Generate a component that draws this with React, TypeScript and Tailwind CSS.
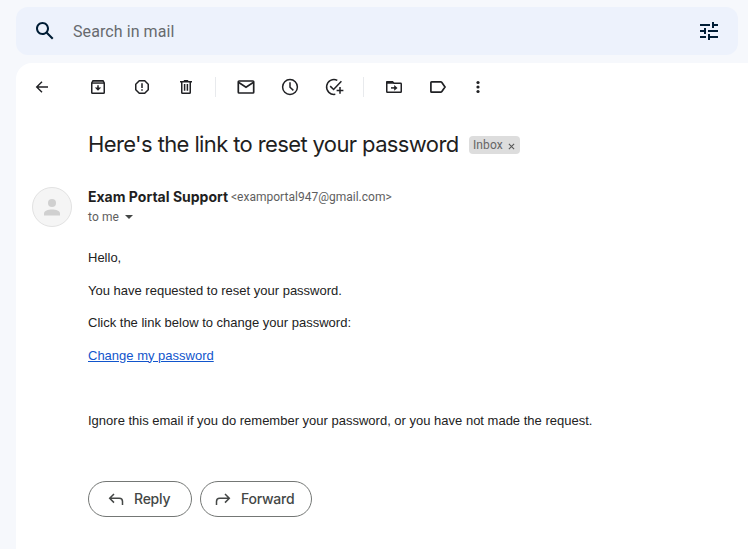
import type { ReactNode } from 'react';

type IconProps = { children: ReactNode; className?: string };

function Icon({ children, className = 'size-5' }: IconProps) {
  return (
    <svg viewBox="0 0 20 20" className={`block shrink-0 ${className}`} fill="none" stroke="currentColor" strokeWidth="1.5">
      {children}
    </svg>
  );
}

function ToolButton({ label, children }: { label: string; children: ReactNode }) {
  return (
    <button aria-label={label} className="flex h-10 w-11 shrink-0 items-center justify-center text-[#202124]">
      {children}
    </button>
  );
}

function SearchBar() {
  return (
    <div className="mr-2.5 ml-4 flex h-12 shrink-0 items-center rounded-xl bg-[#edf2fc] pr-[17px] pl-[17px] text-[#001d35]">
      <svg viewBox="0 0 24 24" className="size-6 shrink-0" fill="currentColor">
        <path d="M20.49 19l-5.73-5.73C15.53 12.2 16 10.91 16 9.5 16 5.91 13.09 3 9.5 3S3 5.91 3 9.5 5.91 16 9.5 16c1.41 0 2.7-.47 3.77-1.24L19 20.49 20.49 19zM5 9.5C5 7.01 7.01 5 9.5 5S14 7.01 14 9.5 11.99 14 9.5 14 5 11.99 5 9.5z" />
      </svg>
      <span className="ml-4 flex-1 pt-0.5 font-['Roboto',sans-serif] text-base tracking-[0.08px] whitespace-nowrap text-[#676a6e]">Search in mail</span>
      <svg viewBox="0 0 24 24" className="size-6 shrink-0" fill="currentColor">
        <path d="M3 17v2h6v-2H3zM3 5v2h10V5H3zm10 16v-2h8v-2h-8v-2h-2v6h2zM7 9v2H3v2h4v2h2V9H7zm14 4v-2H11v2h10zm-6-4h2V7h4V5h-4V3h-2v6z" />
      </svg>
    </div>
  );
}

function Toolbar() {
  return (
    <div className="flex h-12 items-center pl-1">
      <ToolButton label="Back">
        <Icon><path d="M16 10H5M10 4.7 4.7 10l5.3 5.3" strokeWidth="1.4" /></Icon>
      </ToolButton>
      <div className="w-3 shrink-0" />
      <ToolButton label="Archive">
        <Icon>
          <path d="M4 4h12v2.5H4Z" fill="#8a8a8a" stroke="none" />
          <path d="M3.75 6v9.5c0 .5.25.75.75.75h11c.5 0 .75-.25.75-.75V6L15 3.75H5L3.75 6Z" />
          <path d="M4 6.2h12" strokeWidth="1" />
          <path d="M10 8.3v4" />
          <path d="M6.8 10.6h6.4L10 13.8Z" fill="currentColor" stroke="none" />
        </Icon>
      </ToolButton>
      <ToolButton label="Report spam">
        <Icon>
          <path d="M7.3 3.75h5.4l3.55 3.55v5.4l-3.55 3.55H7.3L3.75 12.7V7.3Z" />
          <path d="M10 6.2v4.7M10 12.3v1.5" />
        </Icon>
      </ToolButton>
      <ToolButton label="Delete">
        <Icon>
          <path d="M4 4.75h12M7.8 3.75h4.4M5.75 5v10.5c0 .5.25.75.75.75h7c.5 0 .75-.25.75-.75V5" />
          <path d="M8.6 7v6.8M11.4 7v6.8" />
        </Icon>
      </ToolButton>
      <div className="mr-2 ml-[7px] h-5 w-px shrink-0 bg-[#e8eaed]" />
      <ToolButton label="Mark as unread">
        <Icon>
          <rect x="2.3" y="4" width="15.4" height="12" rx="0.8" strokeWidth="1.7" />
          <path d="m2.8 5.5 7.2 4.7 7.2-4.7" strokeWidth="1.6" />
        </Icon>
      </ToolButton>
      <ToolButton label="Snooze">
        <Icon><circle cx="10" cy="10" r="7.4" /><path d="M10 5.2v5l3.4 3.2" /></Icon>
      </ToolButton>
      <ToolButton label="Add to tasks">
        <Icon>
          <path d="M13.3 3.4A7.4 7.4 0 1 0 11.3 17.3" />
          <path d="m6.2 9.1 3.4 3.4 7.8-8.3M16 10v6.8M12.6 13.4h6.8" />
        </Icon>
      </ToolButton>
      <div className="mr-2 ml-[7px] h-5 w-px shrink-0 bg-[#e8eaed]" />
      <ToolButton label="Move to">
        <Icon>
          <path d="M2.75 5v9.5c0 .4.2.75.6.75h13.3c.4 0 .6-.3.6-.75V6.9c0-.4-.2-.6-.6-.6H10L8.5 4.75H3.2c-.3 0-.45.1-.45.25Z" />
          <path d="M2.5 4.2H8l2 2.6H2.5Z" fill="currentColor" stroke="none" />
          <path d="M7 10.9h4.5" />
          <path d="M10.2 8v5.8l3.3-2.9Z" fill="currentColor" stroke="none" />
        </Icon>
      </ToolButton>
      <ToolButton label="Labels">
        <Icon><path d="M3.6 4.85h9.2c.4 0 .7.2.9.5L17 10l-3.3 4.65c-.2.3-.5.5-.9.5H3.6c-.4 0-.7-.3-.7-.7v-8.9c0-.4.3-.7.7-.7Z" strokeWidth="1.7" /></Icon>
      </ToolButton>
      <div className="-ml-1">
        <ToolButton label="More">
          <Icon>
            <g fill="currentColor" stroke="none"><circle cx="10" cy="5.5" r="1.6" /><circle cx="10" cy="10" r="1.6" /><circle cx="10" cy="14.5" r="1.6" /></g>
          </Icon>
        </ToolButton>
      </div>
    </div>
  );
}

function Subject() {
  return (
    <div className="mt-4 flex h-9 items-center pl-[72px]">
      <h1 className="w-[371px] pb-0.5 font-['Inter',sans-serif] text-[22px] leading-7 tracking-[-0.62px] whitespace-nowrap text-[#1f1f1f]">
        Here's the link to reset your password
      </h1>
      <span className="ml-2.5 flex h-[18px] w-[51px] items-center rounded bg-[#ddd] pl-1 font-['Roboto',sans-serif] text-xs tracking-[0.1px] text-[#666]">
        Inbox
        <svg viewBox="0 0 8 8" className="mt-0.5 ml-[5px] size-[7px]" stroke="#555" strokeWidth="1.2"><path d="m1 1 6 6m0-6L1 7" /></svg>
      </span>
    </div>
  );
}

function Sender() {
  return (
    <div className="mt-6 flex h-10 pl-4">
      <div className="flex size-10 shrink-0 items-center justify-center rounded-full border border-[#e2e2e2] bg-[#f5f5f5]">
        <svg viewBox="0 0 16 18" className="h-[18px] w-4" fill="#d0d0d0">
          <circle cx="8" cy="5" r="4" />
          <path d="M0 17.5v-2c0-2.8 4-4 8-4s8 1.2 8 4v2Z" />
        </svg>
      </div>
      <div className="ml-4">
        <div className="flex h-5 items-center whitespace-nowrap">
          <span className="w-[140px] font-['Inter',sans-serif] text-sm font-bold tracking-[0.01px] text-[#1f1f1f]">Exam Portal Support</span>
          <span className="ml-[3px] font-['Roboto',sans-serif] text-xs tracking-[0.01px] text-[#5e5e5e]">&lt;examportal947@gmail.com&gt;</span>
        </div>
        <div className="flex h-5 items-center font-['Roboto',sans-serif] text-xs tracking-[0.1px] text-[#5e5e5e]">
          to me
          <svg viewBox="0 0 8 4" className="ml-1.5 h-1 w-2" fill="#444746"><path d="M0 0h8L4 4Z" /></svg>
        </div>
      </div>
    </div>
  );
}

function Message() {
  return (
    <div className="mt-[21px] ml-[72px] font-['Liberation_Sans',Arial,sans-serif] text-[13px] leading-[19.5px] text-[#222]">
      <p className="mb-[13px]">Hello,</p>
      <p className="mb-[13px]">You have requested to reset your password.</p>
      <p className="mb-[13px]">Click the link below to change your password:</p>
      <p className="mb-[45.5px]"><a className="text-[#1155cc] underline">Change my password</a></p>
      <p>Ignore this email if you do remember your password, or you have not made the request.</p>
    </div>
  );
}

function Actions() {
  return (
    <div className="mt-[51px] ml-[72px] flex gap-2 font-['Inter',sans-serif] text-sm font-medium text-[#444746]">
      <button className="flex h-9 w-[104px] items-center rounded-full border border-[#747775] pl-[17px]">
        <Icon><path d="M16.5 16v-3.5c0-2-1.2-3.2-3.2-3.2H4M8 5 3.7 9.3 8 13.6" /></Icon>
        <span className="ml-2 tracking-[-0.25px]">Reply</span>
      </button>
      <button className="flex h-9 w-28 items-center rounded-full border border-[#747775] pl-3">
        <Icon><path d="M3.5 16v-3.5c0-2 1.2-3.2 3.2-3.2H16M12 5l4.3 4.3-4.3 4.3" /></Icon>
        <span className="ml-2 tracking-[-0.25px]">Forward</span>
      </button>
    </div>
  );
}

export default function App() {
  return (
    <div className="flex h-[549px] w-[748px] flex-col overflow-hidden bg-[#f6f8fc] pt-[7px]">
      <SearchBar />
      <main className="mt-2 ml-4 flex-1 rounded-tl-2xl bg-white">
        <Toolbar />
        <Subject />
        <Sender />
        <Message />
        <Actions />
      </main>
    </div>
  );
}
